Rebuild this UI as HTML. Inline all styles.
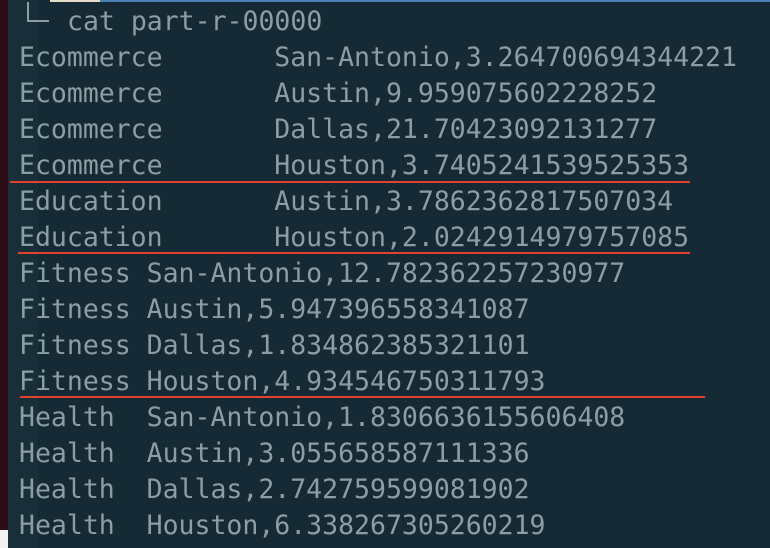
<!DOCTYPE html>
<html><head><style>
html,body{margin:0;padding:0}
body{width:770px;height:548px;background:#152a35;position:relative;overflow:hidden;font-family:"DejaVu Sans Mono","Liberation Mono",monospace;}
.strip{position:absolute;left:0;top:0;width:8px;height:530px;background:#2a0e13}
.strip2{position:absolute;left:0;top:530px;width:8px;height:18px;background:#f2f2f2}
.col{position:absolute;left:8px;top:0;width:30px;height:548px;background:#182f3a}
.bar{position:absolute;top:0;left:100px;right:0;height:2px;background:#4a80b8}
.bar2{position:absolute;top:0;left:50px;width:50px;height:2px;background:#e6dcc4}
.l{position:absolute;left:19px;font-size:26.5px;line-height:36px;color:#8c9ea2;white-space:pre;letter-spacing:0}
.r{position:absolute;height:2px;background:#e0432c}
.corner{position:absolute;left:27px;top:2px;width:22px;height:20px;border-left:2px solid #8c9ea2;border-bottom:2px solid #8c9ea2;box-sizing:border-box}
</style></head><body>
<div class="strip"></div><div class="strip2"></div><div class="col"></div>
<div class="bar2"></div><div class="bar"></div>
<div class="corner"></div>
<div class="l" style="top:4px;left:67px">cat part-r-00000</div>
<div class="l" style="top:40px">Ecommerce       San-Antonio,3.264700694344221</div>
<div class="l" style="top:76px">Ecommerce       Austin,9.959075602228252</div>
<div class="l" style="top:112px">Ecommerce       Dallas,21.70423092131277</div>
<div class="l" style="top:148px">Ecommerce       Houston,3.7405241539525353</div>
<div class="l" style="top:184px">Education       Austin,3.7862362817507034</div>
<div class="l" style="top:220px">Education       Houston,2.0242914979757085</div>
<div class="l" style="top:256px">Fitness San-Antonio,12.782362257230977</div>
<div class="l" style="top:292px">Fitness Austin,5.947396558341087</div>
<div class="l" style="top:328px">Fitness Dallas,1.834862385321101</div>
<div class="l" style="top:364px">Fitness Houston,4.934546750311793</div>
<div class="l" style="top:400px">Health  San-Antonio,1.8306636155606408</div>
<div class="l" style="top:436px">Health  Austin,3.055658587111336</div>
<div class="l" style="top:472px">Health  Dallas,2.742759599081902</div>
<div class="l" style="top:508px">Health  Houston,6.338267305260219</div>
<div class="r" style="top:181px;left:10px;width:680px"></div>
<div class="r" style="top:252px;left:18px;width:672px"></div>
<div class="r" style="top:396px;left:20px;width:685px"></div>
</body></html>
